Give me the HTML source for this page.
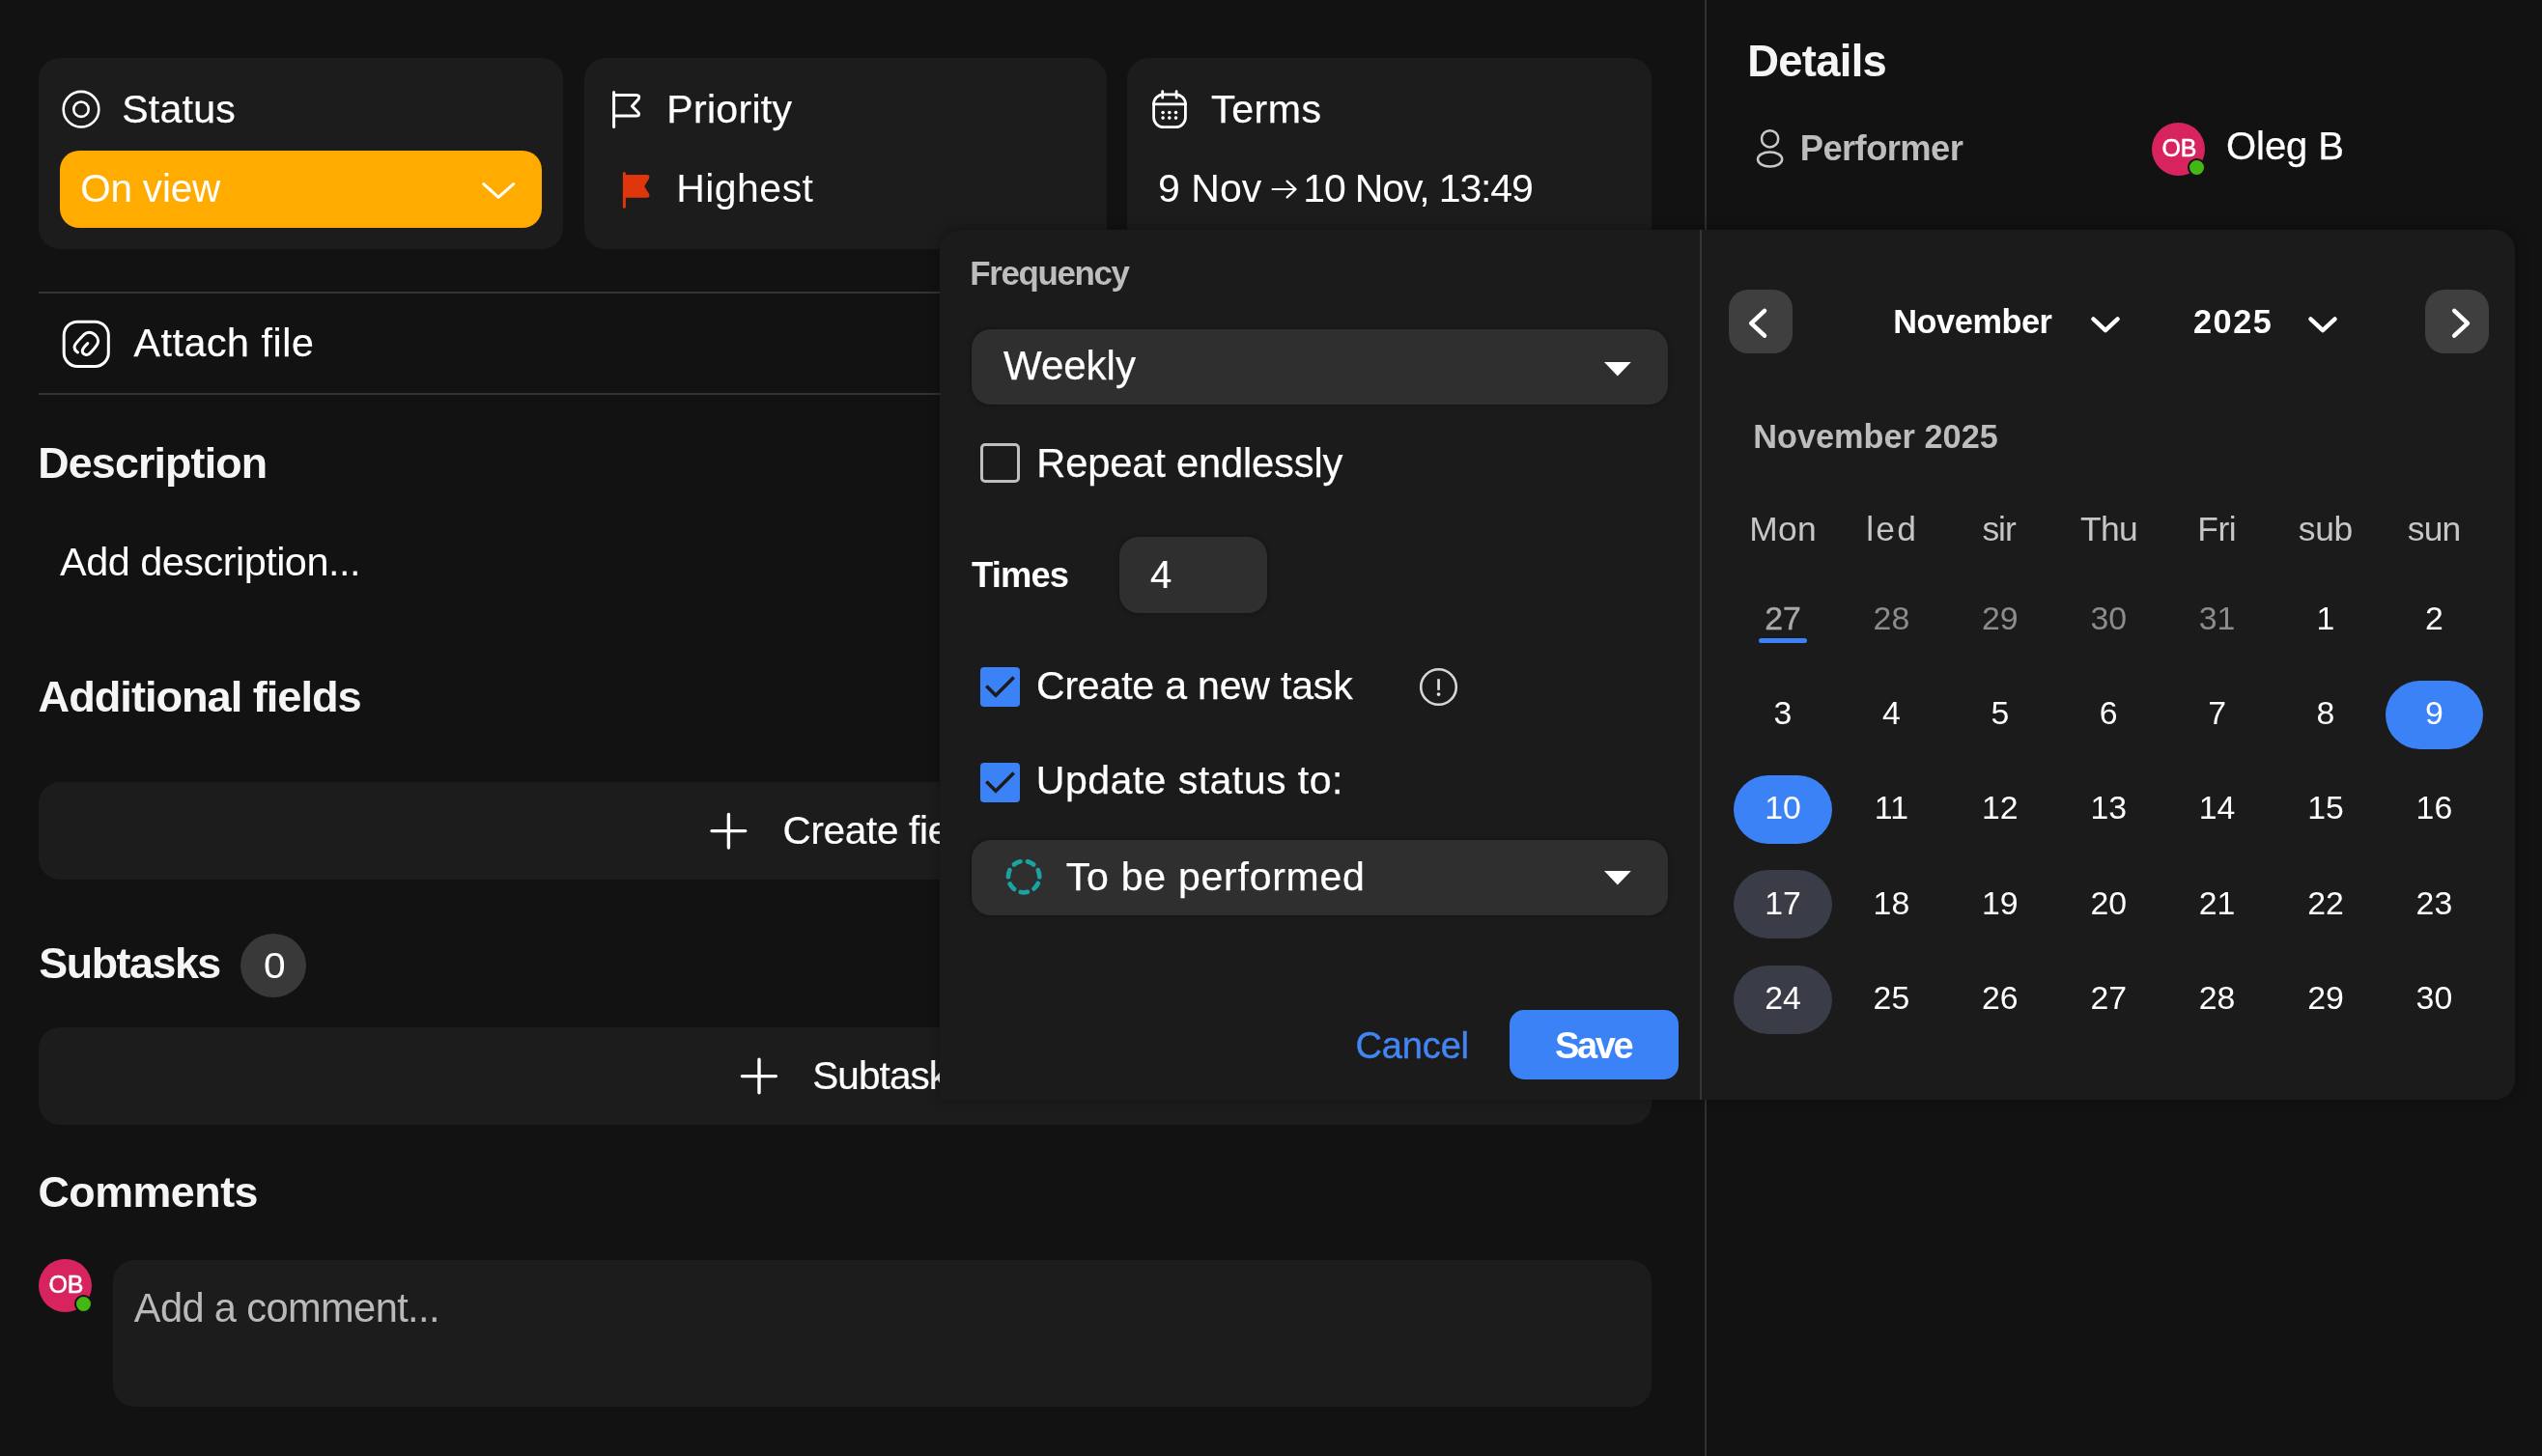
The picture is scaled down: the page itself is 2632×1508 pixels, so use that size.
<!DOCTYPE html>
<html lang="en"><head><meta charset="utf-8"><title>Task</title>
<style>
*{margin:0;padding:0;box-sizing:border-box}
html,body{width:2632px;height:1508px;overflow:hidden;background:#121212}
body{position:relative;font-family:"Liberation Sans",sans-serif;color:#fff}
.t{position:absolute;white-space:nowrap;line-height:1em;font-weight:400}
.b{position:absolute}
.card{position:absolute;background:#1c1c1c;border-radius:22px}
svg{position:absolute;overflow:visible}
</style></head><body><div id="root" style="position:absolute;left:0;top:0;width:2632px;height:1508px;will-change:transform">

<div class="card" style="left:40px;top:60px;width:542.5px;height:198px"></div>
<div class="card" style="left:605px;top:60px;width:540.5px;height:198px"></div>
<div class="card" style="left:1167px;top:60px;width:542.5px;height:198px"></div>
<div class="b" style="left:1764.5px;top:0;width:2px;height:1508px;background:#303030"></div>
<svg style="left:62px;top:92px" width="44" height="44" viewBox="0 0 44 44"><circle cx="22" cy="21.2" r="18.3" fill="none" stroke="#fff" stroke-width="2.6"/><circle cx="22" cy="21.2" r="7.7" fill="none" stroke="#fff" stroke-width="2.6"/></svg>
<span class="t" style="left:126.20px;top:92.99px;font-size:41px;letter-spacing:0.280px;color:#fff;-webkit-text-stroke:0.25px #fff;">Status</span>
<div class="b" style="left:62px;top:155.5px;width:498.5px;height:80.5px;border-radius:20px;background:#ffab00"></div>
<span class="t" style="left:83.15px;top:175.22px;font-size:40.5px;letter-spacing:-0.188px;color:#fff;">On view</span>
<svg style="left:496px;top:186px" width="40" height="24" viewBox="0 0 40 24"><path d="M4.8 4.6 L20 18.3 L35.6 4.6" fill="none" stroke="#fff" stroke-width="3" stroke-linecap="round" stroke-linejoin="round"/></svg>
<svg style="left:630px;top:92px" width="36" height="42" viewBox="0 0 36 42"><path d="M5.6 3.4 V39.4" fill="none" stroke="#fff" stroke-width="3" stroke-linecap="round"/><path d="M5.6 6.4 H28.4 Q33 6.4 31.2 10.4 L24.4 18 L31.2 25 Q33 28 28.4 28 H5.6" fill="none" stroke="#fff" stroke-width="3" stroke-linejoin="round"/></svg>
<span class="t" style="left:690.30px;top:92.99px;font-size:41px;letter-spacing:0.314px;color:#fff;-webkit-text-stroke:0.25px #fff;">Priority</span>
<svg style="left:642px;top:177px" width="34" height="40" viewBox="0 0 34 40"><path d="M4.4 2.6 V37.2" fill="none" stroke="#e0360c" stroke-width="3" stroke-linecap="round"/><path d="M4.4 4.1 H27.6 Q31.6 4.1 30 8 L25.2 16 L30 23.8 Q31.6 27.7 27.6 27.7 H4.4 Z" fill="#e0360c"/></svg>
<span class="t" style="left:700.15px;top:174.59px;font-size:41px;letter-spacing:0.475px;color:#fff;">Highest</span>
<svg style="left:1190px;top:92px" width="42" height="44" viewBox="0 0 42 44">
<rect x="4.6" y="5.8" width="32.8" height="33.8" rx="10" fill="none" stroke="#fff" stroke-width="2.8"/>
<path d="M4.6 15.9 H37.4 M13.7 2.6 V9.2 M28.1 2.6 V9.2" fill="none" stroke="#fff" stroke-width="2.8" stroke-linecap="round"/>
<g fill="#fff"><circle cx="14.1" cy="24.5" r="1.8"/><circle cx="20.8" cy="24.5" r="1.8"/><circle cx="27.5" cy="24.5" r="1.8"/><circle cx="14.1" cy="30.1" r="1.8"/><circle cx="20.8" cy="30.1" r="1.8"/><circle cx="27.5" cy="30.1" r="1.8"/></g></svg>
<span class="t" style="left:1254.10px;top:92.99px;font-size:41px;letter-spacing:0.575px;color:#fff;-webkit-text-stroke:0.25px #fff;">Terms</span>
<span class="t" style="left:1198.95px;top:174.59px;font-size:41px;letter-spacing:0.075px;color:#fff;">9 Nov</span>
<svg style="left:1315px;top:184px" width="30" height="24" viewBox="0 0 30 24"><path d="M2.6 12 H26.4 M17.6 3.6 L26.6 12 L17.6 20.4" fill="none" stroke="#fff" stroke-width="2.2" stroke-linecap="round" stroke-linejoin="round"/></svg>
<span class="t" style="left:1349.30px;top:174.59px;font-size:41px;letter-spacing:-1.146px;color:#fff;">10 Nov, 13:49</span>
<div class="b" style="left:40px;top:302.3px;width:940px;height:2px;background:#333"></div>
<div class="b" style="left:40px;top:407.3px;width:940px;height:2px;background:#333"></div>
<svg style="left:62px;top:329px" width="54" height="54" viewBox="0 0 54 54">
<rect x="4.2" y="4.2" width="46.1" height="46.3" rx="14" fill="none" stroke="#fff" stroke-width="3"/>
<path d="M18.5 36 C16.4 34.6 14.6 32 15.2 29.2 C15.7 27 17.2 25.4 24.8 17.7 C27.5 15.2 31 14.6 34.4 16.4 C38.4 18.6 40.4 22.6 39.2 26.4 C38.4 28.7 36 31.6 32 36 C30.4 38 28.4 39 26.6 38.4 C24.2 37.6 22.8 36 23.4 33.6 C23.8 32 25.6 29.8 28.8 26.6" fill="none" stroke="#fff" stroke-width="3" stroke-linecap="round" stroke-linejoin="round"/>
</svg>
<span class="t" style="left:138.53px;top:334.99px;font-size:41px;letter-spacing:0.627px;color:#fff;-webkit-text-stroke:0.25px #fff;">Attach file</span>
<span class="t" style="left:39.30px;top:456.78px;font-size:44.8px;letter-spacing:-0.863px;color:#f5f5f5;font-weight:700;">Description</span>
<span class="t" style="left:62.05px;top:561.75px;font-size:41.4px;letter-spacing:-0.496px;color:#fff;">Add description...</span>
<span class="t" style="left:39.60px;top:699.44px;font-size:45.2px;letter-spacing:-1.026px;color:#f5f5f5;font-weight:700;">Additional fields</span>
<div class="card" style="left:40px;top:810px;width:1670px;height:101px"></div>
<svg style="left:734px;top:840px" width="42" height="42" viewBox="0 0 42 42"><path d="M20.4 3.4 V38 M3 20.6 H37.8" fill="none" stroke="#fff" stroke-width="3.4" stroke-linecap="round"/></svg>
<span class="t" style="left:810.50px;top:840.22px;font-size:40.5px;letter-spacing:-0.318px;color:#fff;-webkit-text-stroke:0.2px #fff;">Create field</span>
<span class="t" style="left:40.35px;top:975.48px;font-size:44.8px;letter-spacing:-1.467px;color:#f5f5f5;font-weight:700;">Subtasks</span>
<div class="b" style="left:249px;top:966.5px;width:68px;height:66.5px;border-radius:50%;background:#393939"></div>
<span class="t" style="left:272.60px;top:982.59px;font-size:36.4px;letter-spacing:1.305px;color:#fff;transform:scaleX(1.12);transform-origin:0 50%;">0</span>
<div class="card" style="left:40px;top:1064px;width:1670px;height:101px"></div>
<svg style="left:765px;top:1094px" width="42" height="42" viewBox="0 0 42 42"><path d="M21 3.2 V37.8 M3.4 20.6 H38.4" fill="none" stroke="#fff" stroke-width="3.4" stroke-linecap="round"/></svg>
<span class="t" style="left:841.25px;top:1094.47px;font-size:40.5px;letter-spacing:-0.917px;color:#fff;-webkit-text-stroke:0.2px #fff;">Subtask</span>
<span class="t" style="left:39.45px;top:1211.88px;font-size:44.8px;letter-spacing:-0.487px;color:#f5f5f5;font-weight:700;">Comments</span>
<div class="b" style="left:40.0px;top:1304.0px;width:55px;height:55px;border-radius:50%;background:#d7245e"></div>
<span class="t" style="left:50.60px;top:1317.94px;font-size:25px;letter-spacing:-0.400px;color:#fff;-webkit-text-stroke:0.5px #fff;">OB</span>
<div class="b" style="left:77.4px;top:1341.1px;width:19px;height:19px;border-radius:50%;background:#43b814;border:2.6px solid #141414"></div>
<div class="card" style="left:116.75px;top:1304.5px;width:1593.25px;height:152.5px"></div>
<span class="t" style="left:138.75px;top:1333.79px;font-size:41.6px;letter-spacing:-0.612px;color:#b9b9b9;">Add a comment...</span>
<span class="t" style="left:1809.30px;top:41.07px;font-size:45.4px;letter-spacing:-0.729px;color:#f5f5f5;font-weight:700;">Details</span>
<svg style="left:1814px;top:132px" width="38" height="44" viewBox="0 0 38 44"><circle cx="18.6" cy="11.8" r="8.6" fill="none" stroke="#c8c8c8" stroke-width="2.5"/><ellipse cx="18.6" cy="33" rx="12.6" ry="7.6" fill="none" stroke="#c8c8c8" stroke-width="2.5"/></svg>
<span class="t" style="left:1863.78px;top:136.19px;font-size:36.4px;letter-spacing:-0.606px;color:#bdbdbd;font-weight:700;">Performer</span>
<div class="b" style="left:2228.0px;top:127.0px;width:55px;height:55px;border-radius:50%;background:#d7245e"></div>
<span class="t" style="left:2238.60px;top:140.94px;font-size:25px;letter-spacing:-0.400px;color:#fff;-webkit-text-stroke:0.5px #fff;">OB</span>
<div class="b" style="left:2265.4px;top:164.1px;width:19px;height:19px;border-radius:50%;background:#43b814;border:2.6px solid #141414"></div>
<span class="t" style="left:2305.10px;top:130.84px;font-size:40px;letter-spacing:-0.100px;color:#fff;-webkit-text-stroke:0.25px #fff;">Oleg B</span>
<div class="b" style="left:973px;top:237.5px;width:1630.5px;height:901.2px;background:#1b1b1b;border-radius:22px 21px 21px 0;box-shadow:0 -1px 14px 1px rgba(0,0,0,.28)"></div>
<div class="b" style="left:1760.3px;top:237.5px;width:2.2px;height:901.2px;background:#353535"></div>
<span class="t" style="left:1004.20px;top:266.46px;font-size:34.9px;letter-spacing:-1.337px;color:#bdbdbd;font-weight:700;">Frequency</span>
<div class="b" style="left:1005.5px;top:341px;width:1721.8px;width:721.8px;height:78px;border-radius:20px;background:#2f2f2f;box-shadow:0 0 5px rgba(0,0,0,.4)"></div>
<span class="t" style="left:1039.00px;top:358.20px;font-size:42px;letter-spacing:0.000px;color:#fff;-webkit-text-stroke:0.25px #fff;">Weekly</span>
<svg style="left:1661px;top:375px" width="28" height="15" viewBox="0 0 28 15"><path d="M0 0 H27.8 L13.9 14.5 Z" fill="#fff"/></svg>
<div class="b" style="left:1015.2px;top:458.8px;width:41px;height:41px;border:3.6px solid #bfbfbf;border-radius:5px"></div>
<span class="t" style="left:1073.30px;top:458.54px;font-size:41.6px;letter-spacing:-0.138px;color:#fff;-webkit-text-stroke:0.25px #fff;">Repeat endlessly</span>
<span class="t" style="left:1006.05px;top:577.99px;font-size:36.4px;letter-spacing:-0.903px;color:#fff;font-weight:700;">Times</span>
<div class="b" style="left:1158.5px;top:555.8px;width:153.2px;height:79.2px;border-radius:20px;background:#2f2f2f;box-shadow:0 0 5px rgba(0,0,0,.4)"></div>
<span class="t" style="left:1191.00px;top:574.89px;font-size:40px;letter-spacing:0.750px;color:#fff;-webkit-text-stroke:0.2px #fff;">4</span>
<div class="b" style="left:1015.2px;top:690.8px;width:41px;height:41px;border-radius:4px;background:#3b82f6"></div>
<svg style="left:1015.2px;top:690.8px" width="41" height="41" viewBox="0 0 41 41"><path d="M6.3 19.5 L16 29.3 L34.7 10.5" fill="none" stroke="#1c1c1c" stroke-width="3.6" stroke-linecap="butt" stroke-linejoin="miter"/></svg>
<span class="t" style="left:1072.95px;top:689.69px;font-size:41px;letter-spacing:-0.169px;color:#fff;-webkit-text-stroke:0.25px #fff;">Create a new task</span>
<svg style="left:1467px;top:689px" width="45" height="45" viewBox="0 0 45 45"><circle cx="22.5" cy="22.5" r="18.3" fill="none" stroke="#d6d6d6" stroke-width="2.6"/><path d="M22.55 14.2 V25.8" stroke="#e0e0e0" stroke-width="2.7" stroke-linecap="butt"/><circle cx="22.55" cy="30.1" r="1.9" fill="#e0e0e0"/></svg>
<div class="b" style="left:1015.2px;top:789.5px;width:41px;height:41px;border-radius:4px;background:#3b82f6"></div>
<svg style="left:1015.2px;top:789.5px" width="41" height="41" viewBox="0 0 41 41"><path d="M6.3 19.5 L16 29.3 L34.7 10.5" fill="none" stroke="#1c1c1c" stroke-width="3.6" stroke-linecap="butt" stroke-linejoin="miter"/></svg>
<span class="t" style="left:1072.80px;top:788.09px;font-size:41px;letter-spacing:0.472px;color:#fff;-webkit-text-stroke:0.25px #fff;">Update status to:</span>
<div class="b" style="left:1005.5px;top:870px;width:721.8px;height:77.6px;border-radius:20px;background:#2f2f2f;box-shadow:0 0 5px rgba(0,0,0,.4)"></div>
<svg style="left:1038px;top:886px" width="44" height="44" viewBox="0 0 44 44"><circle cx="22.1" cy="22.1" r="16.2" fill="none" stroke="#1aa3a3" stroke-width="4.7" stroke-dasharray="7.2 7.341" stroke-linecap="round" transform="rotate(24.4 22.1 22.1)"/></svg>
<span class="t" style="left:1103.85px;top:887.59px;font-size:41px;letter-spacing:0.746px;color:#fff;-webkit-text-stroke:0.25px #fff;">To be performed</span>
<svg style="left:1661px;top:901.5px" width="28" height="15" viewBox="0 0 28 15"><path d="M0 0 H27.8 L13.9 14.5 Z" fill="#fff"/></svg>
<span class="t" style="left:1403.54px;top:1063.83px;font-size:38px;letter-spacing:-0.154px;color:#4285f4;-webkit-text-stroke:0.4px #4285f4;">Cancel</span>
<div class="b" style="left:1563px;top:1046px;width:175.2px;height:71.5px;border-radius:15px;background:#3b82f6"></div>
<span class="t" style="left:1610.10px;top:1063.83px;font-size:38px;letter-spacing:-2.390px;color:#fff;font-weight:700;">Save</span>
<div class="b" style="left:1790px;top:300px;width:65.5px;height:66px;border-radius:20px;background:#3f3f3f"></div>
<svg style="left:1806px;top:314px" width="30" height="42" viewBox="0 0 30 42"><path d="M21 7.8 L7.2 20.8 L21 33.6" fill="none" stroke="#fff" stroke-width="4.5" stroke-linecap="round" stroke-linejoin="round"/></svg>
<div class="b" style="left:2511px;top:300px;width:65.5px;height:66px;border-radius:20px;background:#3f3f3f"></div>
<svg style="left:2532px;top:314px" width="30" height="42" viewBox="0 0 30 42"><path d="M9.2 7.8 L23 20.8 L9.2 33.6" fill="none" stroke="#fff" stroke-width="4.5" stroke-linecap="round" stroke-linejoin="round"/></svg>
<span class="t" style="left:1960.25px;top:315.97px;font-size:34.3px;letter-spacing:-0.435px;color:#fff;font-weight:700;">November</span>
<svg style="left:2162.5px;top:324px" width="34" height="24" viewBox="0 0 34 24"><path d="M4.4 6.4 L17 18.2 L29.6 6.4" fill="none" stroke="#fff" stroke-width="4.4" stroke-linecap="round" stroke-linejoin="round"/></svg>
<svg style="left:2387.5px;top:324px" width="34" height="24" viewBox="0 0 34 24"><path d="M4.4 6.4 L17 18.2 L29.6 6.4" fill="none" stroke="#fff" stroke-width="4.4" stroke-linecap="round" stroke-linejoin="round"/></svg>
<span class="t" style="left:2271.05px;top:315.97px;font-size:34.3px;letter-spacing:1.496px;color:#fff;font-weight:700;">2025</span>
<span class="t" style="left:1815.20px;top:435.37px;font-size:34.3px;letter-spacing:0.007px;color:#bdbdbd;font-weight:700;">November 2025</span>
<span class="t" style="left:1811.25px;top:530.83px;font-size:35.4px;letter-spacing:0.347px;color:#c6c6c6;">Mon</span>
<span class="t" style="left:1932.29px;top:530.83px;font-size:35.4px;letter-spacing:2.192px;color:#c6c6c6;">led</span>
<span class="t" style="left:2052.42px;top:530.83px;font-size:35.4px;letter-spacing:-1.035px;color:#c6c6c6;">sir</span>
<span class="t" style="left:2154.07px;top:530.83px;font-size:35.4px;letter-spacing:-0.689px;color:#c6c6c6;">Thu</span>
<span class="t" style="left:2275.31px;top:530.83px;font-size:35.4px;letter-spacing:-0.492px;color:#c6c6c6;">Fri</span>
<span class="t" style="left:2379.86px;top:530.83px;font-size:35.4px;letter-spacing:-0.407px;color:#c6c6c6;">sub</span>
<span class="t" style="left:2492.67px;top:530.83px;font-size:35.4px;letter-spacing:-0.719px;color:#c6c6c6;">sun</span>
<span class="t" style="left:1827.22px;top:623.99px;font-size:33.8px;letter-spacing:0.000px;color:#a9a9a9;-webkit-text-stroke:0.4px #a9a9a9;">27</span>
<span class="t" style="left:1939.62px;top:623.99px;font-size:33.8px;letter-spacing:0.000px;color:#8c8c8c;">28</span>
<span class="t" style="left:2052.02px;top:623.99px;font-size:33.8px;letter-spacing:0.000px;color:#8c8c8c;">29</span>
<span class="t" style="left:2164.42px;top:623.99px;font-size:33.8px;letter-spacing:0.000px;color:#8c8c8c;">30</span>
<span class="t" style="left:2276.82px;top:623.99px;font-size:33.8px;letter-spacing:0.000px;color:#8c8c8c;">31</span>
<span class="t" style="left:2398.61px;top:623.99px;font-size:33.8px;letter-spacing:0.000px;color:#fff;">1</span>
<span class="t" style="left:2511.01px;top:623.99px;font-size:33.8px;letter-spacing:0.000px;color:#fff;">2</span>
<span class="t" style="left:1836.61px;top:722.24px;font-size:33.8px;letter-spacing:0.000px;color:#fff;">3</span>
<span class="t" style="left:1949.01px;top:722.24px;font-size:33.8px;letter-spacing:0.000px;color:#fff;">4</span>
<span class="t" style="left:2061.41px;top:722.24px;font-size:33.8px;letter-spacing:0.000px;color:#fff;">5</span>
<span class="t" style="left:2173.81px;top:722.24px;font-size:33.8px;letter-spacing:0.000px;color:#fff;">6</span>
<span class="t" style="left:2286.21px;top:722.24px;font-size:33.8px;letter-spacing:0.000px;color:#fff;">7</span>
<span class="t" style="left:2398.61px;top:722.24px;font-size:33.8px;letter-spacing:0.000px;color:#fff;">8</span>
<div class="b" style="left:2469.5px;top:704.75px;width:101.8px;height:71.2px;border-radius:36px;background:#3b82f6"></div>
<span class="t" style="left:2511.01px;top:722.24px;font-size:33.8px;letter-spacing:0.000px;color:#fff;">9</span>
<div class="b" style="left:1795.1px;top:803.00px;width:101.8px;height:71.2px;border-radius:36px;background:#3b82f6"></div>
<span class="t" style="left:1827.22px;top:820.49px;font-size:33.8px;letter-spacing:0.000px;color:#fff;">10</span>
<span class="t" style="left:1940.87px;top:820.49px;font-size:33.8px;letter-spacing:0.000px;color:#fff;">11</span>
<span class="t" style="left:2052.02px;top:820.49px;font-size:33.8px;letter-spacing:0.000px;color:#fff;">12</span>
<span class="t" style="left:2164.42px;top:820.49px;font-size:33.8px;letter-spacing:0.000px;color:#fff;">13</span>
<span class="t" style="left:2276.82px;top:820.49px;font-size:33.8px;letter-spacing:0.000px;color:#fff;">14</span>
<span class="t" style="left:2389.22px;top:820.49px;font-size:33.8px;letter-spacing:0.000px;color:#fff;">15</span>
<span class="t" style="left:2501.62px;top:820.49px;font-size:33.8px;letter-spacing:0.000px;color:#fff;">16</span>
<div class="b" style="left:1795.1px;top:901.25px;width:101.8px;height:71.2px;border-radius:36px;background:#3a3d48"></div>
<span class="t" style="left:1827.22px;top:918.74px;font-size:33.8px;letter-spacing:0.000px;color:#fff;">17</span>
<span class="t" style="left:1939.62px;top:918.74px;font-size:33.8px;letter-spacing:0.000px;color:#fff;">18</span>
<span class="t" style="left:2052.02px;top:918.74px;font-size:33.8px;letter-spacing:0.000px;color:#fff;">19</span>
<span class="t" style="left:2164.42px;top:918.74px;font-size:33.8px;letter-spacing:0.000px;color:#fff;">20</span>
<span class="t" style="left:2276.82px;top:918.74px;font-size:33.8px;letter-spacing:0.000px;color:#fff;">21</span>
<span class="t" style="left:2389.22px;top:918.74px;font-size:33.8px;letter-spacing:0.000px;color:#fff;">22</span>
<span class="t" style="left:2501.62px;top:918.74px;font-size:33.8px;letter-spacing:0.000px;color:#fff;">23</span>
<div class="b" style="left:1795.1px;top:999.50px;width:101.8px;height:71.2px;border-radius:36px;background:#3a3d48"></div>
<span class="t" style="left:1827.22px;top:1016.99px;font-size:33.8px;letter-spacing:0.000px;color:#fff;">24</span>
<span class="t" style="left:1939.62px;top:1016.99px;font-size:33.8px;letter-spacing:0.000px;color:#fff;">25</span>
<span class="t" style="left:2052.02px;top:1016.99px;font-size:33.8px;letter-spacing:0.000px;color:#fff;">26</span>
<span class="t" style="left:2164.42px;top:1016.99px;font-size:33.8px;letter-spacing:0.000px;color:#fff;">27</span>
<span class="t" style="left:2276.82px;top:1016.99px;font-size:33.8px;letter-spacing:0.000px;color:#fff;">28</span>
<span class="t" style="left:2389.22px;top:1016.99px;font-size:33.8px;letter-spacing:0.000px;color:#fff;">29</span>
<span class="t" style="left:2501.62px;top:1016.99px;font-size:33.8px;letter-spacing:0.000px;color:#fff;">30</span>
<div class="b" style="left:1821.2px;top:661.2px;width:49.6px;height:5.2px;border-radius:3px;background:#3b82f6"></div>
</div></body></html>
